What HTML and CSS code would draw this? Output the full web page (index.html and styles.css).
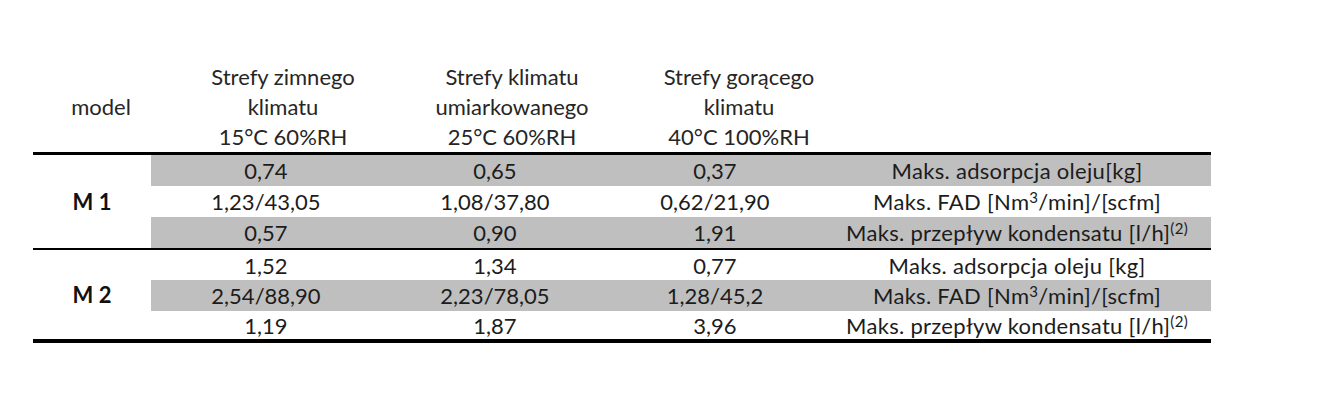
FILE: index.html
```html
<!DOCTYPE html>
<html lang="pl">
<head>
<meta charset="utf-8">
<title>Tabela</title>
<link rel="stylesheet" href="styles.css">
</head>
<body>
<div class="page">
  <div class="sheet">
    <div class="head">
      <div class="hcell hmodel">model</div>
      <div class="hcell h1">Strefy zimnego<br>klimatu<br>15°C 60%RH</div>
      <div class="hcell h2">Strefy klimatu<br>umiarkowanego<br>25°C 60%RH</div>
      <div class="hcell h3">Strefy gorącego<br>klimatu<br>40°C 100%RH</div>
    </div>
    <div class="group g1">
      <div class="model">M 1</div>
      <div class="c shade">0,74</div>
      <div class="c shade">0,65</div>
      <div class="c shade">0,37</div>
      <div class="c shade lbl"><span>Maks. adsorpcja oleju[kg]</span></div>
      <div class="c">1,23/43,05</div>
      <div class="c">1,08/37,80</div>
      <div class="c">0,62/21,90</div>
      <div class="c lbl"><span>Maks. FAD [Nm<sup>3</sup>/min]/[scfm]</span></div>
      <div class="c shade">0,57</div>
      <div class="c shade">0,90</div>
      <div class="c shade">1,91</div>
      <div class="c shade lbl"><span>Maks. przepływ kondensatu [l/h]<sup>(2)</sup></span></div>
    </div>
    <div class="group g2">
      <div class="model">M 2</div>
      <div class="c">1,52</div>
      <div class="c">1,34</div>
      <div class="c">0,77</div>
      <div class="c lbl"><span>Maks. adsorpcja oleju [kg]</span></div>
      <div class="c shade">2,54/88,90</div>
      <div class="c shade">2,23/78,05</div>
      <div class="c shade">1,28/45,2</div>
      <div class="c shade lbl"><span>Maks. FAD [Nm<sup>3</sup>/min]/[scfm]</span></div>
      <div class="c">1,19</div>
      <div class="c">1,87</div>
      <div class="c">3,96</div>
      <div class="c lbl"><span>Maks. przepływ kondensatu [l/h]<sup>(2)</sup></span></div>
    </div>
  </div>
</div>
</body>
</html>
```

FILE: styles.css
```css
html, body {
  margin: 0;
  padding: 0;
  background: #ffffff;
}
.page {
  padding: 62px 0 0 33px;
  font-family: Lato, "Liberation Sans", sans-serif;
  font-size: 22px;
  color: #1c1c1c;
}
.sheet {
  width: 1178px;
}
.head {
  display: flex;
  height: 90px;
}
.hcell {
  text-align: center;
  line-height: 30px;
  color: #262626;
}
.hmodel {
  width: 136px;
  display: flex;
  align-items: center;
  justify-content: center;
}
.h1 { width: 228px; }
.h2 { width: 230px; }
.h3 { width: 224px; }
.group {
  display: grid;
  grid-template-columns: 118px 230px 228px 212px 1fr;
}
.g1 {
  border-top: 3px solid #000;
  grid-template-rows: 31px 31px 31px;
}
.g2 {
  border-top: 2px solid #000;
  border-bottom: 4px solid #000;
  grid-template-rows: 30px 31px 28px;
}
.model {
  grid-row: span 3;
  display: flex;
  align-items: center;
  justify-content: center;
  font-weight: 700;
  color: #111;
}
.c {
  display: flex;
  align-items: center;
  justify-content: center;
  white-space: nowrap;
}
.lbl {
  padding-left: 2px;
}
.lbl span {
  letter-spacing: 0.3px;
}
.shade {
  background: #bfbfbf;
}
sup {
  font-size: 15px;
  line-height: 0;
  vertical-align: 7px;
}
```
